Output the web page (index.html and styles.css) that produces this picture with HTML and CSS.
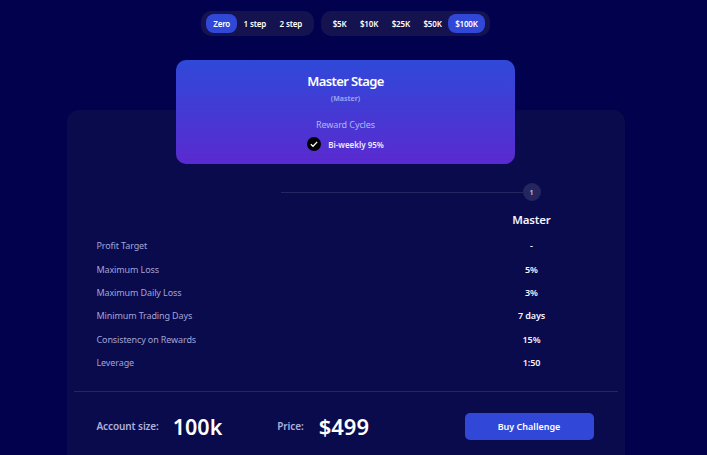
FILE: index.html
```html
<!DOCTYPE html>
<html lang="en">
<head>
	<meta charset="utf-8" />
	<title>Challenge Plans</title>
	<link rel="stylesheet" href="styles.css">
</head>
<body>
<div class="tabs">
	<div class="tabgroup">
		<span class="tab active">Zero</span>
		<span class="tab">1 step</span>
		<span class="tab">2 step</span>
	</div>
	<div class="tabgroup">
		<span class="tab">$5K</span>
		<span class="tab">$10K</span>
		<span class="tab">$25K</span>
		<span class="tab">$50K</span>
		<span class="tab active">$100K</span>
	</div>
</div>

<div class="stage">
	<h1>Master Stage</h1>
	<div class="sub">(Master)</div>
	<div class="cycles">Reward Cycles</div>
	<div class="cycle">
		<span class="check">
			<svg width="14" height="14" viewBox="0 0 14 14"><path d="M3.8 7.3 6 9.3 10.2 4.9" fill="none" stroke="#fff" stroke-width="1.3"/></svg>
		</span>
		<b>Bi-weekly 95%</b>
	</div>
</div>

<div class="panel">
	<div class="steps">
		<div class="line"></div>
		<div class="num">1</div>
	</div>
	<div class="row head"><span></span><b>Master</b></div>
	<div class="row"><span>Profit Target</span><b>-</b></div>
	<div class="row"><span>Maximum Loss</span><b>5%</b></div>
	<div class="row"><span>Maximum Daily Loss</span><b>3%</b></div>
	<div class="row"><span>Minimum Trading Days</span><b>7 days</b></div>
	<div class="row"><span>Consistency on Rewards</span><b>15%</b></div>
	<div class="row"><span>Leverage</span><b>1:50</b></div>
	<hr>
	<div class="footer">
		<span class="label">Account size:</span>
		<span class="value size">100k</span>
		<span class="label">Price:</span>
		<span class="value price">$499</span>
		<button type="button">Buy Challenge</button>
	</div>
</div>
</body>
</html>
```

FILE: styles.css
```css
*{
	font-family:"Noto Sans","Open Sans",sans-serif;
	box-sizing:border-box;
}

html,body{
	height:100%;
	overflow:hidden;
}

html{
	background:#01014d;
}

body{
	width:691px;
	margin:0;
	padding-top:11px;
	color:#fff;
}

.tabs{
	display:flex;
	justify-content:center;
	gap:7px;
}

.tabgroup{
	display:flex;
	height:25px;
	padding:3px 5px;
	border-radius:10px;
	background:#15134f;
}

.tab{
	display:flex;
	align-items:center;
	padding:0 6.75px;
	border-radius:8px;
	font-size:8px;
	font-weight:600;
	letter-spacing:-0.17px;
}

.tab.active{
	background:#3047d8;
}

.stage{
	position:relative;
	z-index:1;
	width:339px;
	height:104px;
	margin:24px auto 0;
	padding-top:12px;
	border-radius:10px;
	background:linear-gradient(180deg,#2f49d8 0%,#5a2ad0 100%);
	text-align:center;
}

.stage h1{
	margin:0;
	font-size:13px;
	line-height:18px;
	font-weight:600;
	letter-spacing:-0.6px;
}

.sub{
	margin-top:4px;
	font-size:7px;
	line-height:10px;
	font-weight:700;
	color:#9aa2f2;
}

.cycles{
	margin-top:15px;
	font-size:9px;
	line-height:12px;
	letter-spacing:-0.1px;
	color:#b3b6f5;
}

.cycle{
	display:flex;
	justify-content:center;
	align-items:center;
	gap:7px;
	margin-top:6px;
	font-size:8px;
}

.cycle b{
	font-weight:600;
	color:#eeeaff;
}

.check{
	display:flex;
	align-items:center;
	justify-content:center;
	width:14px;
	height:14px;
	border-radius:50%;
	background:#000;
}

.panel{
	width:558px;
	height:345px;
	margin:-54px auto 0;
	padding:73px 7px 0;
	border-radius:12px 12px 0 0;
	background:#0a0b4c;
}

.steps{
	display:flex;
	align-items:center;
	height:18px;
	margin:0 77px 0 207px;
}

.line{
	flex:1;
	height:1px;
	background:#25265f;
}

.num{
	display:flex;
	align-items:center;
	justify-content:center;
	width:18px;
	height:18px;
	border-radius:50%;
	background:#25265f;
	font-size:7px;
	font-weight:600;
	color:#c9c9e6;
}

.row{
	display:flex;
	justify-content:space-between;
	align-items:center;
	height:23.4px;
	padding:0 66px 0 23px;
	font-size:9px;
	letter-spacing:-0.12px;
	color:#a0a4d8;
}

.row b{
	width:40px;
	text-align:center;
	font-weight:600;
	color:#f4f4ff;
}

.row.head{
	height:24px;
	margin-top:6px;
	margin-bottom:3px;
}

.row.head b{
	font-size:11.5px;
	letter-spacing:-0.2px;
}

hr{
	height:1px;
	margin:17px 0 0;
	border:0;
	background:#25265f;
}

.footer{
	display:flex;
	align-items:center;
	height:42px;
	margin-top:13px;
	padding:0 24px 0 23px;
}

.label{
	font-size:10px;
	font-weight:600;
	letter-spacing:-0.1px;
	color:#aeb0dc;
}

.value{
	margin-left:14px;
	font-size:21.5px;
	font-weight:600;
}

.value.size{
	margin-right:55px;
}

.value.price{
	margin-left:15px;
	font-size:22px;
}

button{
	width:129px;
	height:27px;
	margin-left:auto;
	border:0;
	border-radius:5px;
	background:#3047d8;
	color:#fff;
	font-size:9px;
	font-weight:600;
}
```
